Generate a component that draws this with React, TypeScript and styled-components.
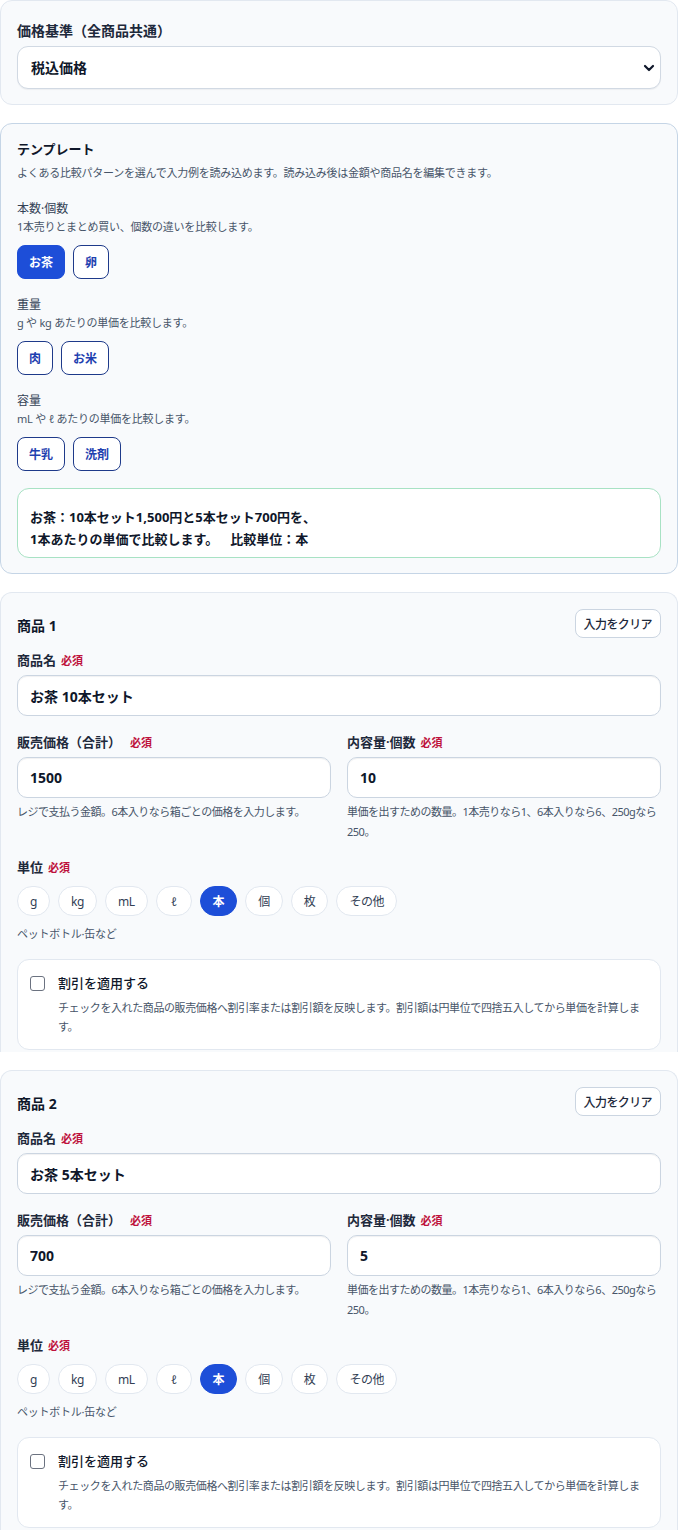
import React from "react";
import styled, { createGlobalStyle, css } from "styled-components";

const GlobalStyle = createGlobalStyle`
  html, body { margin: 0; padding: 0; background: #ffffff; }
  body {
    font-family: "Noto Sans", "Noto Sans CJK JP", sans-serif;
    color: #0f172a;
    -webkit-font-smoothing: antialiased;
  }
  * { box-sizing: border-box; }
`;

const Page = styled.div`
  width: 678px;
  display: flex;
  flex-direction: column;
  gap: 18px;
`;

const Card = styled.section<{ $variant?: "plain" | "template" | "product" }>`
  background: #f8fafc;
  border: 1px solid #e2e8f0;
  border-radius: 12px;
  padding: 20px 16px 15px;
  ${(p) =>
    p.$variant === "template" &&
    css`
      border-color: #c5d5e6;
      padding: 16px 16px 15px;
    `}
  ${(p) =>
    p.$variant === "product" &&
    css`
      padding: 16px 16px 2px;
      border-bottom: none;
      border-radius: 12px 12px 0 0;
    `}
`;

const FieldLabel = styled.div<{ $size?: number }>`
  font-size: ${(p) => p.$size ?? 13}px;
  font-weight: 600;
  line-height: 20px;
  color: #1e293b;
  display: flex;
  align-items: baseline;
`;

const Required = styled.span<{ $gap?: number }>`
  font-size: 11px;
  font-weight: 700;
  color: #be123c;
  margin-left: ${(p) => p.$gap ?? 5}px;
`;

const SelectWrap = styled.div`
  position: relative;
  margin-top: 5px;
`;

const Select = styled.select`
  appearance: none;
  -webkit-appearance: none;
  width: 100%;
  height: 43px;
  border: 1px solid #d1d9e3;
  border-radius: 11px;
  background: #ffffff;
  padding: 0 12px 0 13px;
  font-family: inherit;
  font-size: 14px;
  font-weight: 700;
  color: #0f172a;
  box-shadow: 0 1px 1px rgba(15, 23, 42, 0.05);
`;

const Chevron = styled.svg`
  position: absolute;
  right: 6px;
  top: 17px;
  pointer-events: none;
`;

const Title = styled.div`
  font-size: 13px;
  font-weight: 700;
  line-height: 18px;
  color: #0f172a;
`;

const Note = styled.div<{ $mt?: number }>`
  font-size: 11px;
  line-height: 20px;
  letter-spacing: -0.25px;
  color: #475569;
  margin-top: ${(p) => p.$mt ?? 0}px;
`;

const Groups = styled.div`
  display: flex;
  flex-direction: column;
  gap: 17px;
  margin-top: 17px;
`;

const Group = styled.div`
  display: flex;
  flex-direction: column;
`;

const GroupLabel = styled.div`
  font-size: 12px;
  line-height: 18px;
  color: #334155;
`;

const GroupNote = styled.div`
  font-size: 11px;
  line-height: 18px;
  letter-spacing: -0.25px;
  color: #475569;
`;

const ButtonRow = styled.div`
  display: flex;
  gap: 8px;
  margin-top: 9px;
`;

const TemplateButton = styled.button<{ $active?: boolean }>`
  height: 34px;
  padding: 0 11px;
  border-radius: 8px;
  border: 1px solid #1e3a8a;
  background: #ffffff;
  color: #1e40af;
  font-family: inherit;
  font-size: 12px;
  font-weight: 700;
  ${(p) =>
    p.$active &&
    css`
      background: #1d4ed8;
      border-color: #1d4ed8;
      color: #ffffff;
    `}
`;

const Summary = styled.div`
  margin-top: 17px;
  background: #ffffff;
  border: 1px solid #a8e2c4;
  border-radius: 12px;
  padding: 17px 12px 7px;
  font-size: 13px;
  font-weight: 700;
  line-height: 22px;
  color: #0f172a;
`;

const SummaryUnit = styled.span`
  margin-left: 12px;
`;

const CardHeader = styled.div`
  display: flex;
  justify-content: space-between;
  align-items: center;
  height: 29px;
`;

const ProductTitle = styled.div`
  font-size: 14px;
  font-weight: 700;
  color: #0f172a;
  padding-top: 2px;
`;

const ClearButton = styled.button`
  height: 29px;
  padding: 0 8px;
  border: 1px solid #cbd5e1;
  border-radius: 8px;
  background: #ffffff;
  font-family: inherit;
  font-size: 12px;
  font-weight: 500;
  letter-spacing: -0.6px;
  color: #1e293b;
`;

const Field = styled.div<{ $mt?: number }>`
  display: flex;
  flex-direction: column;
  margin-top: ${(p) => p.$mt ?? 0}px;
`;

const TextInput = styled.input`
  margin-top: 4px;
  width: 100%;
  height: 41px;
  border: 1px solid #cbd5e1;
  border-radius: 10px;
  background: #ffffff;
  padding: 0 12px;
  font-family: inherit;
  font-size: 14px;
  font-weight: 700;
  color: #0f172a;
  box-shadow: inset 0 1px 1px rgba(15, 23, 42, 0.06);
`;

const TwoCols = styled.div`
  display: grid;
  grid-template-columns: 1fr 1fr;
  gap: 16px;
  margin-top: 16px;
`;

const HelpText = styled.div`
  margin-top: 4px;
  font-size: 11px;
  line-height: 20px;
  letter-spacing: -0.5px;
  color: #475569;
`;

const PillRow = styled.div`
  display: flex;
  gap: 8px;
  margin-top: 8px;
`;

const Pill = styled.button<{ $active?: boolean; $padX?: number }>`
  height: 30px;
  padding: 0 ${(p) => p.$padX ?? 12}px;
  border-radius: 999px;
  border: 1px solid #e2e8f0;
  background: #ffffff;
  font-family: inherit;
  font-size: 12px;
  letter-spacing: -0.4px;
  color: #334155;
  ${(p) =>
    p.$active &&
    css`
      background: #1d4ed8;
      border-color: #1d4ed8;
      color: #ffffff;
      font-weight: 700;
    `}
`;

const DiscountBox = styled.label`
  margin-top: 15px;
  display: flex;
  gap: 13px;
  align-items: flex-start;
  background: #ffffff;
  border: 1px solid #e2e8f0;
  border-radius: 12px;
  padding: 13px 12px 13px;
`;

const Check = styled.input`
  appearance: none;
  -webkit-appearance: none;
  margin: 3px 0 0;
  width: 15px;
  height: 15px;
  flex: none;
  border: 1px solid #6b7280;
  border-radius: 3px;
  background: #ffffff;
`;

const DiscountText = styled.div`
  display: flex;
  flex-direction: column;
`;

const DiscountTitle = styled.div`
  font-size: 13px;
  line-height: 20px;
  font-weight: 500;
  color: #0f172a;
`;

const DiscountNote = styled.div`
  margin-top: 5px;
  font-size: 11px;
  line-height: 19px;
  letter-spacing: -0.4px;
  color: #475569;
`;

const templateGroups = [
  { label: "本数·個数", note: "1本売りとまとめ買い、個数の違いを比較します。", items: ["お茶", "卵"] },
  { label: "重量", note: "g や kg あたりの単価を比較します。", items: ["肉", "お米"] },
  { label: "容量", note: "mL や ℓ あたりの単価を比較します。", items: ["牛乳", "洗剤"] },
];

const units = ["g", "kg", "mL", "ℓ", "本", "個", "枚", "その他"];

type Product = { no: number; name: string; price: string; qty: string };

const products: Product[] = [
  { no: 1, name: "お茶 10本セット", price: "1500", qty: "10" },
  { no: 2, name: "お茶 5本セット", price: "700", qty: "5" },
];

function ProductCard({ p }: { p: Product }) {
  return (
    <Card $variant="product">
      <CardHeader>
        <ProductTitle>商品 {p.no}</ProductTitle>
        <ClearButton type="button">入力をクリア</ClearButton>
      </CardHeader>
      <Field $mt={12}>
        <FieldLabel>
          商品名<Required>必須</Required>
        </FieldLabel>
        <TextInput defaultValue={p.name} />
      </Field>
      <TwoCols>
        <Field>
          <FieldLabel>
            販売価格（合計）<Required $gap={9}>必須</Required>
          </FieldLabel>
          <TextInput defaultValue={p.price} />
          <HelpText>レジで支払う金額。6本入りなら箱ごとの価格を入力します。</HelpText>
        </Field>
        <Field>
          <FieldLabel>
            内容量·個数<Required>必須</Required>
          </FieldLabel>
          <TextInput defaultValue={p.qty} />
          <HelpText>単価を出すための数量。1本売りなら1、6本入りなら6、250gなら250。</HelpText>
        </Field>
      </TwoCols>
      <Field $mt={15}>
        <FieldLabel>
          単位<Required>必須</Required>
        </FieldLabel>
        <PillRow>
          {units.map((u) => (
            <Pill key={u} type="button" $active={u === "本"} $padX={u === "ℓ" ? 14 : 12}>
              {u}
            </Pill>
          ))}
        </PillRow>
        <Note $mt={8}>ペットボトル·缶など</Note>
      </Field>
      <DiscountBox>
        <Check type="checkbox" />
        <DiscountText>
          <DiscountTitle>割引を適用する</DiscountTitle>
          <DiscountNote>
            チェックを入れた商品の販売価格へ割引率または割引額を反映します。割引額は円単位で四捨五入してから単価を計算します。
          </DiscountNote>
        </DiscountText>
      </DiscountBox>
    </Card>
  );
}

export default function App() {
  return (
    <>
      <GlobalStyle />
      <Page>
        <Card>
          <FieldLabel $size={14}>価格基準（全商品共通）</FieldLabel>
          <SelectWrap>
            <Select defaultValue="incl">
              <option value="incl">税込価格</option>
              <option value="excl">税抜価格</option>
            </Select>
            <Chevron width="12" height="10" viewBox="0 0 12 10">
              <polyline points="2,3 6,7 10,3" fill="none" stroke="#0f172a" strokeWidth="2.2" strokeLinecap="round" strokeLinejoin="round" />
            </Chevron>
          </SelectWrap>
        </Card>

        <Card $variant="template">
          <Title>テンプレート</Title>
          <Note $mt={5}>よくある比較パターンを選んで入力例を読み込めます。読み込み後は金額や商品名を編集できます。</Note>
          <Groups>
            {templateGroups.map((g) => (
              <Group key={g.label}>
                <GroupLabel>{g.label}</GroupLabel>
                <GroupNote>{g.note}</GroupNote>
                <ButtonRow>
                  {g.items.map((it) => (
                    <TemplateButton key={it} type="button" $active={it === "お茶"}>
                      {it}
                    </TemplateButton>
                  ))}
                </ButtonRow>
              </Group>
            ))}
          </Groups>
          <Summary>
            <div>お茶：10本セット1,500円と5本セット700円を、</div>
            <div>
              1本あたりの単価で比較します。<SummaryUnit>比較単位：本</SummaryUnit>
            </div>
          </Summary>
        </Card>

        {products.map((p) => (
          <ProductCard key={p.no} p={p} />
        ))}
      </Page>
    </>
  );
}
